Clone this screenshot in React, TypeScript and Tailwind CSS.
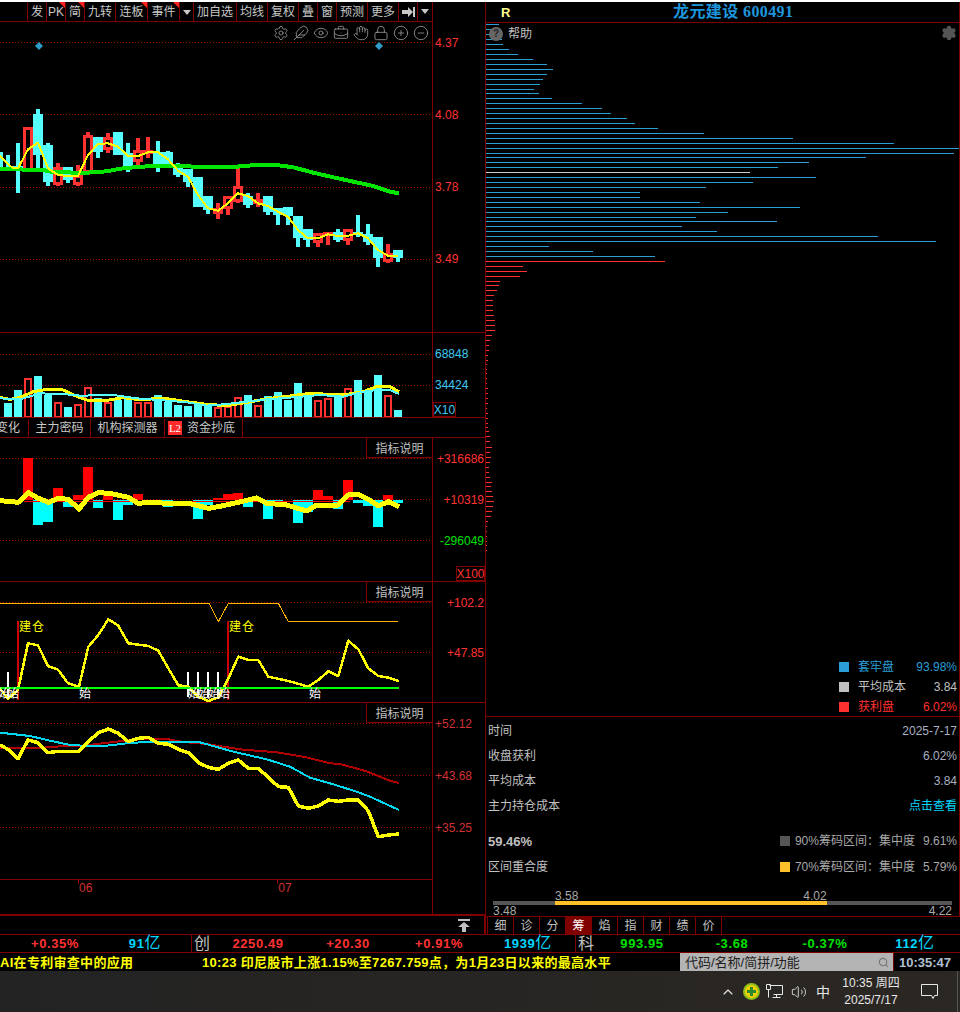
import type { ReactNode } from "react";
import {
  ChevronUp,
  CircleMinus,
  CirclePlus,
  Eye,
  Feather,
  Hand,
  Lock,
  Search,
  Settings,
  Volume2,
  BriefcaseBusiness,
} from "lucide-react";

type Kind = "r" | "c";
type Candle = [number, number, number, number, number, Kind];

const CYAN = "#55ffff";
const RED = "#ff3232";

// cx, high, low, body top, body bottom, kind (screen px)
const candles: Candle[] = [
  [-2, 152, 168, 152, 167, "c"],
  [8, 155, 168, 160, 160, "c"],
  [18, 143, 193, 166, 168, "c"],
  [28, 127, 172, 127, 171, "r"],
  [38, 109, 168, 114, 155, "c"],
  [48, 143, 186, 145, 182, "c"],
  [58, 163, 186, 167, 185, "r"],
  [68, 167, 183, 167, 180, "c"],
  [78, 165, 186, 175, 185, "r"],
  [88, 132, 175, 135, 173, "r"],
  [98, 137, 158, 137, 152, "c"],
  [108, 133, 153, 137, 150, "r"],
  [118, 132, 155, 132, 155, "c"],
  [128, 143, 172, 153, 166, "c"],
  [138, 138, 165, 150, 162, "r"],
  [148, 137, 158, 150, 153, "r"],
  [158, 141, 172, 152, 167, "c"],
  [168, 151, 165, 152, 165, "c"],
  [178, 163, 177, 168, 175, "c"],
  [188, 169, 187, 169, 182, "c"],
  [198, 177, 207, 177, 207, "c"],
  [208, 196, 214, 196, 210, "c"],
  [218, 203, 219, 208, 214, "r"],
  [228, 196, 215, 196, 209, "r"],
  [238, 168, 203, 186, 202, "r"],
  [248, 193, 208, 196, 205, "c"],
  [258, 193, 207, 199, 204, "r"],
  [268, 196, 215, 196, 212, "c"],
  [278, 208, 225, 208, 215, "c"],
  [288, 207, 225, 207, 216, "c"],
  [298, 216, 247, 216, 238, "c"],
  [308, 229, 247, 229, 240, "c"],
  [318, 233, 247, 233, 243, "r"],
  [328, 232, 245, 232, 235, "r"],
  [338, 229, 242, 232, 240, "c"],
  [348, 229, 245, 229, 241, "r"],
  [358, 215, 237, 232, 235, "c"],
  [368, 224, 245, 234, 242, "c"],
  [378, 237, 267, 237, 258, "c"],
  [388, 244, 263, 253, 262, "r"],
  [398, 250, 262, 250, 258, "c"],
];

const priceYellow = [0,197,24,222,40,235,54,235,84,178,114,158,144,235,174,255,204,258,234,258,264,195,294,162,324,160,354,170,384,198,414,198,444,187,474,187,504,208,534,242,564,260,594,315,624,355,654,362,684,340,714,310,744,318,774,340,804,348,834,365,864,380,894,420,924,445,954,445,984,433,1014,438,1044,437,1074,430,1104,445,1134,480,1164,497,1194,497];
const priceGreen = [0,237,130,240,160,247,260,248,320,244,360,236,420,230,480,228,600,230,710,230,780,224,830,225,880,232,940,248,1000,262,1060,275,1120,288,1170,305,1197,310];

const volBars: [number, number, Kind][] = [
  [8,403,"c"],[18,390,"c"],[28,378,"r"],[38,376,"c"],[48,395,"c"],[58,402,"r"],[68,407,"c"],[78,404,"r"],[88,387,"r"],[98,398,"c"],
  [108,402,"r"],[118,400,"c"],[128,397,"c"],[138,402,"r"],[148,402,"r"],[158,395,"c"],[168,402,"c"],[178,405,"c"],[188,406,"c"],[198,404,"c"],
  [208,406,"c"],[218,407,"r"],[228,406,"r"],[238,397,"r"],[248,395,"c"],[258,405,"r"],[268,396,"c"],[278,392,"c"],[288,400,"c"],[298,383,"c"],
  [308,393,"c"],[318,400,"r"],[328,398,"r"],[338,397,"c"],[348,388,"r"],[358,380,"c"],[368,390,"c"],[378,375,"c"],[388,395,"r"],[398,410,"c"],
];
const volYellow = [0,172,30,178,60,172,100,155,140,148,190,150,220,165,260,180,310,183,370,173,410,178,500,176,560,185,620,193,680,197,740,187,810,175,870,168,930,160,1030,165,1090,155,1130,140,1170,140,1197,155];
const volCyan = [0,175,60,178,120,160,200,163,240,167,340,165,410,175,500,182,560,187,620,197,680,192,740,185,800,178,880,172,960,165,1030,170,1090,155,1130,150,1170,150,1197,162];

// x, far end of the bar in zoomed px (baseline 480)
const flowBars: [number, number][] = [
  [28,355],[38,555],[48,546],[58,444],[68,500],[78,465],[88,381],[98,503],[108,455],[118,540],[128,495],[138,462],[158,490],[168,500],
  [198,537],[208,495],[218,474],[228,462],[238,460],[248,500],[268,537],[278,488],[298,549],[308,515],[318,450],[328,468],[338,507],
  [348,420],[358,488],[368,498],[378,561],[388,465],[398,489],
];
const flowYellow = [0,482,55,487,85,458,115,475,145,487,175,475,205,478,237,507,265,472,295,458,330,460,385,472,415,490,445,487,505,490,565,490,595,497,625,505,655,500,715,487,770,474,800,490,860,495,920,513,950,495,1015,495,1045,465,1075,463,1105,478,1135,498,1165,485,1197,500];

const signalOrange = [0,70,627,70,655,125,685,70,835,70,865,125,1195,125];
const signalYellow = [0,325,24,357,54,330,84,190,114,196,144,258,174,269,204,310,237,320,265,200,295,165,325,118,355,137,385,190,445,198,475,212,505,265,535,316,565,320,595,350,625,363,655,352,685,296,715,230,745,240,775,240,805,290,865,303,925,320,955,300,985,274,1015,288,1045,182,1075,208,1105,265,1135,288,1165,293,1197,303];

const kdjYellow = [0,135,24,148,54,176,84,120,114,128,144,158,174,154,237,154,265,125,295,98,325,87,355,100,385,125,415,115,445,112,475,130,505,133,535,148,565,158,595,188,625,202,655,208,685,190,715,180,745,205,775,205,805,232,835,260,865,262,895,318,925,325,955,318,985,300,1015,304,1045,300,1075,300,1105,333,1135,410,1165,405,1197,402];
const kdjCyan = [0,98,90,108,150,122,210,135,250,137,320,137,380,130,450,125,520,125,600,127,700,155,800,178,870,200,930,233,1000,253,1070,275,1110,290,1197,330];
const kdjRed = [0,145,130,143,160,140,250,137,330,127,420,118,500,117,550,126,620,132,720,148,830,157,920,172,990,190,1020,192,1100,214,1170,242,1197,249];

// y of the first chip bar is 24; right ends read from the picture
const blueChips: [number, number][] = [
  [24,57],[29,50],[34,65],[39,65],[44,69],[49,87],[54,114],[59,159],[64,201],[69,219],[74,201],[79,189],[84,180],[89,162],[93,177],[98,216],[103,306],[108,366],[113,393],[118,441],[123,465],[128,534],
  [133,672],[138,939],[143,1242],[148,1437],[153,1422],[157,1158],[162,987],[167,894],[177,1008],[182,819],[187,678],[192,480],[197,480],[202,660],[207,960],[212,744],[217,648],[221,891],[226,606],[231,711],[236,1194],[241,1368],[246,207],[251,339],[256,525],
];
const redChips: [number, number][] = [
  [261,555],[266,129],[271,141],[276,120],[281,60],[285,57],[290,51],[295,42],[300,39],[305,39],[310,39],[315,42],[320,45],[325,45],
  [330,27],[335,18],[340,12],[345,9],[350,9],[355,6],[360,6],[364,3],[369,3],[373,3],[378,3],[383,3],[388,6],[393,6],[398,6],[403,6],[408,3],[413,6],[418,6],[423,6],[427,6],[431,9],[436,12],[441,12],[447,18],[452,12],[457,15],[462,12],[467,9],[472,9],[477,12],[482,18],[486,15],[491,18],[496,21],[501,24],[506,21],[511,18],[516,15],[521,6],[526,3],[531,2],[536,2],[541,2],[545,2],[550,2],
];

function pts(values: number[], dy: number) {
  const out: string[] = [];
  for (let i = 0; i < values.length; i += 2) {
    out.push(`${values[i] / 3},${values[i + 1] / 3 + dy}`);
  }
  return out.join(" ");
}

function Line({ values, dy, color, width }: { values: number[]; dy: number; color: string; width: number }) {
  return (
    <polyline
      fill="none"
      points={pts(values, dy)}
      shapeRendering="crispEdges"
      stroke={color}
      strokeLinejoin="round"
      strokeWidth={width}
    />
  );
}

function Grid({ ys }: { ys: number[] }) {
  return (
    <>
      {ys.map((y) => (
        <line key={y} shapeRendering="crispEdges" stroke="#a80000" strokeDasharray="1 2" x1="0" x2="432" y1={y + 0.5} y2={y + 0.5} />
      ))}
    </>
  );
}

function Chart({ height, children }: { height: number; children: ReactNode }) {
  return (
    <svg className="block" height={height} viewBox={`0 0 432 ${height}`} width="432">
      {children}
    </svg>
  );
}

function HelpTag() {
  return (
    <div className="absolute right-0 top-0 flex h-[20px] w-[66px] items-center justify-center border-b border-l border-[#800000] bg-black pt-[2px] text-[12px] leading-none text-[#c0c0c0]">
      指标说明
    </div>
  );
}

function ToolBtn({ label, w, flag }: { label: ReactNode; w: string; flag?: boolean }) {
  return (
    <div className={`relative flex items-center justify-center border-r border-[#800000] pt-[1px] text-[12px] leading-none text-[#c8c8c8] ${w}`}>
      {label}
      {flag ? <span className="absolute right-0 top-0 border-l-[6px] border-t-[6px] border-l-transparent border-t-[#ff2020]" /> : null}
    </div>
  );
}

function Caret() {
  return (
    <svg height="5" viewBox="0 0 8 5" width="8">
      <path d="M0 0h8L4 5z" fill="#c8c8c8" />
    </svg>
  );
}

function Toolbar() {
  return (
    <div className="flex h-[20px] w-[433px] border-b border-r border-[#800000]">
      <div className="w-[28px] border-r border-[#800000]" />
      <ToolBtn label="发" w="w-[19px]" />
      <ToolBtn flag label="PK" w="w-[19px]" />
      <ToolBtn flag label="简" w="w-[19px]" />
      <ToolBtn label="九转" w="w-[31px]" />
      <ToolBtn flag label="连板" w="w-[32px]" />
      <ToolBtn flag label="事件" w="w-[32px]" />
      <ToolBtn label={<Caret />} w="w-[14px]" />
      <ToolBtn label="加自选" w="w-[43px]" />
      <ToolBtn label="均线" w="w-[31px]" />
      <ToolBtn label="复权" w="w-[31px]" />
      <ToolBtn label="叠" w="w-[19px]" />
      <ToolBtn label="窗" w="w-[19px]" />
      <ToolBtn label="预测" w="w-[31px]" />
      <ToolBtn label="更多" w="w-[31px]" />
      <ToolBtn
        label={
          <svg height="10" viewBox="0 0 13 10" width="13">
            <path d="M0 3h6V0l5 5-5 5V7H0zM11 0h2v10h-2z" fill="#c8c8c8" />
          </svg>
        }
        w="w-[19px]"
      />
      <div className="flex flex-1 items-center justify-center">
        <Caret />
      </div>
    </div>
  );
}

function PricePane() {
  const icons = [Settings, Feather, Eye, BriefcaseBusiness, Hand, Lock, CirclePlus, CircleMinus];
  return (
    <div className="flex h-[311px] border-b border-[#800000]">
      <div className="relative w-[433px] border-r border-[#800000]">
        <Chart height={310}>
          <Grid ys={[20, 92, 165, 237]} />
          <path d="M39 20l4 4-4 4-4-4zM379 20l4 4-4 4-4-4z" fill="#2e9bc8" />
          {candles.map(([cx, hi, lo, top, bot, kind]) => {
            const color = kind === "r" ? RED : CYAN;
            return (
              <g key={cx} shapeRendering="crispEdges">
                <rect fill={color} height={lo - hi} width="4" x={cx - 2} y={hi - 22} />
                {kind === "c" ? (
                  <rect fill={color} height={bot - top} width="10" x={cx - 5} y={top - 22} />
                ) : (
                  <rect fill="#000" height={Math.max(bot - top - 3, 1)} stroke={color} strokeWidth="3" width="7" x={cx - 3.5} y={top - 20.5} />
                )}
              </g>
            );
          })}
          <Line color="#00e600" dy={68} values={priceGreen} width={4} />
          <Line color="#ffff00" dy={68} values={priceYellow} width={2} />
        </Chart>
        <div className="absolute right-[3px] top-[3px] flex gap-[4px]">
          {icons.map((Icon, i) => (
            <Icon color="#a0a0a0" key={i} size={16} strokeWidth={1.2} />
          ))}
        </div>
      </div>
      <div className="relative flex-1 text-[12px] leading-[14px] text-[#ff3232]">
        <span className="absolute left-[2px] top-[14px]">4.37</span>
        <span className="absolute left-[2px] top-[86px]">4.08</span>
        <span className="absolute left-[2px] top-[158px]">3.78</span>
        <span className="absolute left-[2px] top-[230px]">3.49</span>
      </div>
    </div>
  );
}

function VolumePane() {
  return (
    <div className="flex h-[85px] border-b border-[#800000]">
      <div className="w-[433px] border-r border-[#800000]">
        <Chart height={84}>
          <Grid ys={[21, 52]} />
          {volBars.map(([cx, top, kind]) =>
            kind === "c" ? (
              <rect fill={CYAN} height={417 - top} key={cx} shapeRendering="crispEdges" width="8" x={cx - 4} y={top - 333} />
            ) : (
              <rect fill="#000" height={417 - top - 1} key={cx} shapeRendering="crispEdges" stroke={RED} strokeWidth="2" width="6" x={cx - 3} y={top - 332} />
            ),
          )}
          <Line color="#ffff00" dy={7} values={volYellow} width={3} />
          <Line color={CYAN} dy={7} values={volCyan} width={2} />
        </Chart>
      </div>
      <div className="relative flex-1 text-[12px] leading-[14px] text-[#40c8f0]">
        <span className="absolute left-[2px] top-[14px]">68848</span>
        <span className="absolute left-[2px] top-[45px]">34424</span>
        <span className="absolute bottom-0 left-0 flex h-[15px] w-[23px] items-center justify-center border border-[#800000] bg-black">X10</span>
      </div>
    </div>
  );
}

function Tabs() {
  return (
    <div className="flex h-[20px] overflow-hidden border-b border-[#800000] pt-[1px] text-[12px] leading-none text-[#c8c8c8]">
      <div className="flex w-[29px] items-center justify-end border-r border-[#800000] pr-[8px] whitespace-nowrap">变化</div>
      <div className="flex w-[62px] items-center justify-center border-r border-[#800000]">主力密码</div>
      <div className="flex w-[74px] items-center justify-center border-r border-[#800000]">机构探测器</div>
      <div className="flex w-[78px] items-center gap-[5px] border-r border-[#800000] pl-[3px]">
        <span className="flex h-[14px] w-[14px] items-center justify-center bg-[#ff2a2a] font-['Liberation_Serif',serif] text-[11px] text-white">L2</span>
        资金抄底
      </div>
    </div>
  );
}

function FlowPane() {
  return (
    <div className="flex h-[144px] border-b border-[#800000]">
      <div className="relative w-[433px] border-r border-[#800000]">
        <Chart height={143}>
          <Grid ys={[20, 61, 102]} />
          {flowBars.map(([x, z]) => {
            const y = Math.min(z, 480) / 3 - 98;
            const h = Math.abs(z - 480) / 3;
            return <rect fill={z < 480 ? "#ff0000" : "#00ffff"} height={h} key={x} shapeRendering="crispEdges" width="10" x={x - 5} y={y} />;
          })}
          <line shapeRendering="crispEdges" stroke="#ff0000" x1="24" x2="350" y1="63.5" y2="63.5" />
          <Line color="#ffff00" dy={-98} values={flowYellow} width={5} />
        </Chart>
        <HelpTag />
      </div>
      <div className="relative flex-1 text-[12px] leading-[14px] text-[#ff3232]">
        <span className="absolute right-[1px] top-[14px]">+316686</span>
        <span className="absolute right-[1px] top-[55px]">+10319</span>
        <span className="absolute right-[1px] top-[96px] text-[#00e000]">-296049</span>
        <span className="absolute bottom-0 right-0 flex h-[15px] w-[29px] items-center justify-center border border-[#800000] bg-black">X100</span>
      </div>
    </div>
  );
}

function SignalPane() {
  const starts = ["left-[-2px]", "left-[7px]", "left-[79px]", "left-[188px]", "left-[198px]", "left-[208px]", "left-[218px]", "left-[309px]"];
  return (
    <div className="flex h-[121px] border-b border-[#800000]">
      <div className="relative w-[433px] overflow-hidden border-r border-[#800000]">
        <Chart height={120}>
          <Grid ys={[20, 70]} />
          <Line color="#ffb400" dy={-2} values={signalOrange} width={1} />
          <g shapeRendering="crispEdges">
            {[8, 188, 198, 208, 218].map((x) => (
              <rect fill="#fff" height="25" key={x} width="2" x={x - 1} y="90" />
            ))}
            <rect fill="#c80000" height="79" width="2" x="17" y="39" />
            <rect fill="#c80000" height="79" width="2" x="227" y="39" />
          </g>
          <Line color="#ffff00" dy={-2} values={signalYellow} width={2.5} />
          <rect fill="#00ff00" height="2" shapeRendering="crispEdges" width="399" x="0" y="105" />
        </Chart>
        <span className="absolute left-[19px] top-[38px] text-[12px] leading-[14px] tracking-[1px] text-[#ffff00]">建仓</span>
        <span className="absolute left-[229px] top-[38px] text-[12px] leading-[14px] tracking-[1px] text-[#ffff00]">建仓</span>
        {starts.map((left) => (
          <span className={`absolute top-[105px] text-[12px] leading-[14px] text-white ${left}`} key={left}>
            始
          </span>
        ))}
        <HelpTag />
      </div>
      <div className="relative flex-1 text-[12px] leading-[14px] text-[#ff3232]">
        <span className="absolute right-[1px] top-[14px]">+102.2</span>
        <span className="absolute right-[1px] top-[64px]">+47.85</span>
      </div>
    </div>
  );
}

function XTick({ label, className }: { label: string; className: string }) {
  return (
    <span className={`relative pl-[1px] pt-[1px] ${className}`}>
      <i className="absolute left-0 top-0 h-[4px] w-px bg-[#a00000]" />
      {label}
    </span>
  );
}

function KdjPane() {
  return (
    <div className="flex h-[213px] border-b-2 border-[#800000]">
      <div className="w-[433px] border-r border-[#800000]">
        <div className="relative h-[177px] border-b border-[#800000]">
          <Chart height={176}>
            <Grid ys={[20, 72, 124]} />
            <Line color="#b00000" dy={-3} values={kdjRed} width={2} />
            <Line color="#00d8f0" dy={-3} values={kdjCyan} width={2} />
            <Line color="#ffff00" dy={-3} values={kdjYellow} width={3.5} />
          </Chart>
          <HelpTag />
        </div>
        <div className="flex text-[12px] leading-[14px] text-[#d03232]">
          <XTick className="ml-[78px]" label="06" />
          <XTick className="ml-[185px]" label="07" />
        </div>
      </div>
      <div className="relative flex-1 text-[12px] leading-[14px] text-[#d03232]">
        <span className="absolute left-[2px] top-[14px]">+52.12</span>
        <span className="absolute left-[2px] top-[66px]">+43.68</span>
        <span className="absolute left-[2px] top-[118px]">+35.25</span>
      </div>
    </div>
  );
}

function ChipPanel() {
  return (
    <div className="relative h-[694px] border-b border-[#800000]">
      <svg className="block" height="693" viewBox="0 0 473 693" width="473">
        <g shapeRendering="crispEdges">
          {blueChips.map(([y, end]) => (
            <rect fill="#2a9fd6" height="1" key={y} width={end / 3 - 6} x="0" y={y - 23} />
          ))}
          <rect fill="#c8c8c8" height="1" width="264" x="0" y="149" />
          {redChips.map(([y, end], i) => (
            <rect fill="#ff3030" height="1" key={i} width={i < 14 ? end / 3 - 6 : end / 3} x="0" y={y - 23} />
          ))}
        </g>
      </svg>
      <div className="absolute left-[3px] top-[4px] flex items-center gap-[5px] text-[12px] leading-none text-[#c0c0c0]">
        <span className="flex h-[14px] w-[14px] items-center justify-center rounded-full bg-[#666] text-[10px] font-bold text-[#222]">?</span>
        帮助
      </div>
      <Settings className="absolute right-[2px] top-[2px]" color="#555" fill="#555" size={16} />
      <div className="absolute bottom-[-1px] right-[2px] flex w-[118px] flex-col text-[12px]">
        <LegendRow color="bg-[#2a9fd6]" label="套牢盘" text="text-[#2a9fd6]" value="93.98%" />
        <LegendRow color="bg-[#c0c0c0]" label="平均成本" text="text-[#c0c0c0]" value="3.84" />
        <LegendRow color="bg-[#ff3030]" label="获利盘" text="text-[#ff3030]" value="6.02%" />
      </div>
    </div>
  );
}

function LegendRow({ color, label, text, value }: { color: string; label: string; text: string; value: string }) {
  return (
    <div className={`flex h-[20px] items-center leading-none ${text}`}>
      <span className={`mr-[9px] h-[10px] w-[10px] ${color}`} />
      {label}
      <span className="ml-auto">{value}</span>
    </div>
  );
}

function InfoRow({ label, value, valueClass }: { label: string; value: string; valueClass?: string }) {
  return (
    <div className="flex h-[25px] items-center justify-between pl-[2px] pr-[2px] text-[12px] leading-none text-[#c0c0c0]">
      {label}
      <span className={valueClass ?? "text-[#a8b0c0]"}>{value}</span>
    </div>
  );
}

function InfoPanel() {
  return (
    <div className="flex h-[198px] flex-col pt-[1px]">
      <InfoRow label="时间" value="2025-7-17" />
      <InfoRow label="收盘获利" value="6.02%" />
      <InfoRow label="平均成本" value="3.84" />
      <InfoRow label="主力持仓成本" value="点击查看" valueClass="text-[#00d8ff]" />
      <div className="mt-[11px] flex h-[24px] items-center justify-between pl-[2px] pr-[2px] text-[12px] leading-none text-[#c0c0c0]">
        <span className="text-[13px] font-bold">59.46%</span>
        <span className="flex items-center text-[#a8a8a8]">
          <span className="mr-[5px] h-[10px] w-[10px] bg-[#555]" />
          90%筹码区间：集中度<span className="ml-[8px]">9.61%</span>
        </span>
      </div>
      <div className="mt-[2px] flex h-[24px] items-center justify-between pl-[2px] pr-[2px] text-[12px] leading-none text-[#c0c0c0]">
        区间重合度
        <span className="flex items-center text-[#a8a8a8]">
          <span className="mr-[5px] h-[10px] w-[10px] bg-[#ffc02a]" />
          70%筹码区间：集中度<span className="ml-[8px]">5.79%</span>
        </span>
      </div>
      <div className="mx-[7px] mt-[12px] flex w-[459px] flex-col text-[12px] leading-[10px] text-[#a8a8a8]">
        <div className="flex h-[10px] items-end">
          <span className="ml-[62px]">3.58</span>
          <span className="ml-[225px]">4.02</span>
        </div>
        <div className="flex h-[4px] bg-[#555]">
          <span className="ml-[62px] w-[272px] bg-[#ffc02a]" />
        </div>
        <div className="flex h-[10px] justify-between pt-[1px]">
          <span>3.48</span>
          <span>4.22</span>
        </div>
      </div>
    </div>
  );
}

function BottomTabs() {
  const tabs = ["细", "诊", "分", "筹", "焰", "指", "财", "绩", "价"];
  return (
    <div className="flex h-[18px] flex-1 items-end border-t border-[#800000] pl-[1px]">
      <div className="flex h-[17px] border-l border-[#800000]">
        {tabs.map((t) => (
          <div
            className={`flex w-[26px] items-center justify-center border-r border-[#800000] text-[12px] leading-none ${t === "筹" ? "bg-[#800000] text-white" : "text-[#c0c0c0]"}`}
            key={t}
          >
            {t}
          </div>
        ))}
      </div>
    </div>
  );
}

function Amount({ value, className }: { value: string; className: string }) {
  return (
    <div className={`text-center text-[#00d8ff] ${className}`}>
      {value}
      <span className="text-[16px] font-normal">亿</span>
    </div>
  );
}

function TickerRow() {
  return (
    <div className="flex h-[19px] items-center border-y border-[#800000] font-bold text-[13px] leading-[16px] tracking-[0.6px]">
      <div className="w-[110px] text-center text-[#ff3232]">+0.35%</div>
      <Amount className="w-[70px]" value="91" />
      <div className="h-[17px] w-[12px] border-r border-[#800000]" />
      <div className="w-[22px] pl-[2px] text-[16px] font-normal text-[#c0c0c0]">创</div>
      <div className="w-[88px] text-center text-[#ff3232]">2250.49</div>
      <div className="w-[92px] text-center text-[#ff3232]">+20.30</div>
      <div className="w-[90px] text-center text-[#ff3232]">+0.91%</div>
      <Amount className="w-[88px]" value="1939" />
      <div className="h-[17px] w-[4px] border-r border-[#800000]" />
      <div className="w-[24px] pl-[2px] text-[16px] font-normal text-[#c0c0c0]">科</div>
      <div className="w-[84px] text-center text-[#00e000]">993.95</div>
      <div className="w-[96px] text-center text-[#00e000]">-3.68</div>
      <div className="w-[90px] text-center text-[#00e000]">-0.37%</div>
      <Amount className="w-[90px]" value="112" />
    </div>
  );
}

function NewsRow() {
  return (
    <div className="flex h-[18px] items-center text-[13px] font-bold leading-none text-[#ffff00]">
      <div className="flex w-[680px] whitespace-nowrap tracking-[0.3px]">
        <span className="w-[202px]">AI在专利审查中的应用</span>
        <span>10:23 印尼股市上涨1.15%至7267.759点，为1月23日以来的最高水平</span>
      </div>
      <div className="flex h-full w-[214px] items-center justify-between border-r border-[#800000] bg-[#b4b4b4] pl-[5px] pr-[4px] text-[13px] font-normal text-[#222]">
        代码/名称/简拼/功能
        <Search color="#777" size={11} strokeWidth={2.5} />
      </div>
      <div className="flex-1 pl-[5px] text-[13px] text-[#b0c0d0]">10:35:47</div>
    </div>
  );
}

function Taskbar() {
  return (
    <div className="flex h-[41px] items-center bg-gradient-to-r from-[#232323] to-[#2b2723] pl-[720px] text-[#e8e8e8]">
      <ChevronUp size={16} strokeWidth={1.6} />
      <svg className="ml-[7px]" height="17" viewBox="0 0 17 17" width="17">
        <circle cx="8.5" cy="8.5" fill="#8fbf1f" r="8.5" />
        <circle cx="8.5" cy="8.5" fill="#f0d000" r="6.5" />
        <path d="M7 4h3v3h3v3h-3v3H7v-3H4V7h3z" fill="#2c8c2c" />
      </svg>
      <svg className="ml-[6px]" fill="none" height="15" stroke="#e8e8e8" viewBox="0 0 17 15" width="17">
        <path d="M3.5 1.5h13v9h-9M10.5 10.5v3M6.5 13.5h8M.5 .5h4v5h-4zM2.5 5.5v8" />
      </svg>
      <Volume2 className="ml-[8px]" size={16} strokeWidth={1.3} />
      <span className="ml-[9px] text-[14px] leading-none">中</span>
      <div className="ml-[11px] flex w-[60px] flex-col items-center text-[12px] leading-[17px]">
        <span>10:35 周四</span>
        <span>2025/7/17</span>
      </div>
      <svg className="ml-[20px]" fill="none" height="16" stroke="#e8e8e8" viewBox="0 0 17 16" width="17">
        <path d="M.5 .5h16v11h-3l-1.5 3-1.5-3h-10z" />
      </svg>
      <div className="ml-[19px] h-full w-px bg-[#555]" />
    </div>
  );
}

export default function App() {
  return (
    <div className="flex h-[1012px] w-[960px] flex-col overflow-hidden bg-black font-['Liberation_Sans','Noto_Sans_CJK_SC',sans-serif]">
      <div className="h-[2px] bg-white" />
      <div className="flex h-[914px]">
        <div className="flex w-[486px] flex-col border-r border-[#800000]">
          <div className="flex">
            <Toolbar />
          </div>
          <PricePane />
          <VolumePane />
          <Tabs />
          <FlowPane />
          <SignalPane />
          <KdjPane />
        </div>
        <div className="flex flex-1 flex-col border-r border-[#800000]">
          <div className="flex h-[21px] items-center border-b border-[#800000]">
            <span className="w-[187px] pl-[15px] text-[13px] font-bold leading-none text-[#ffff90]">R</span>
            <span className="font-['Liberation_Serif','Noto_Sans_CJK_SC',serif] text-[16px] font-bold leading-none tracking-[0.4px] text-[#1e96dc]">龙元建设 600491</span>
          </div>
          <ChipPanel />
          <InfoPanel />
        </div>
      </div>
      <div className="flex h-[18px]">
        <div className="flex w-[486px] items-center justify-end border-r-2 border-[#800000] pr-[14px]">
          <svg height="13" viewBox="0 0 12 13" width="12">
            <path d="M0 0h12v2H0zM6 3l6 5H8v5H4V8H0z" fill="#c0c0c0" />
          </svg>
        </div>
        <BottomTabs />
      </div>
      <TickerRow />
      <NewsRow />
      <Taskbar />
    </div>
  );
}
